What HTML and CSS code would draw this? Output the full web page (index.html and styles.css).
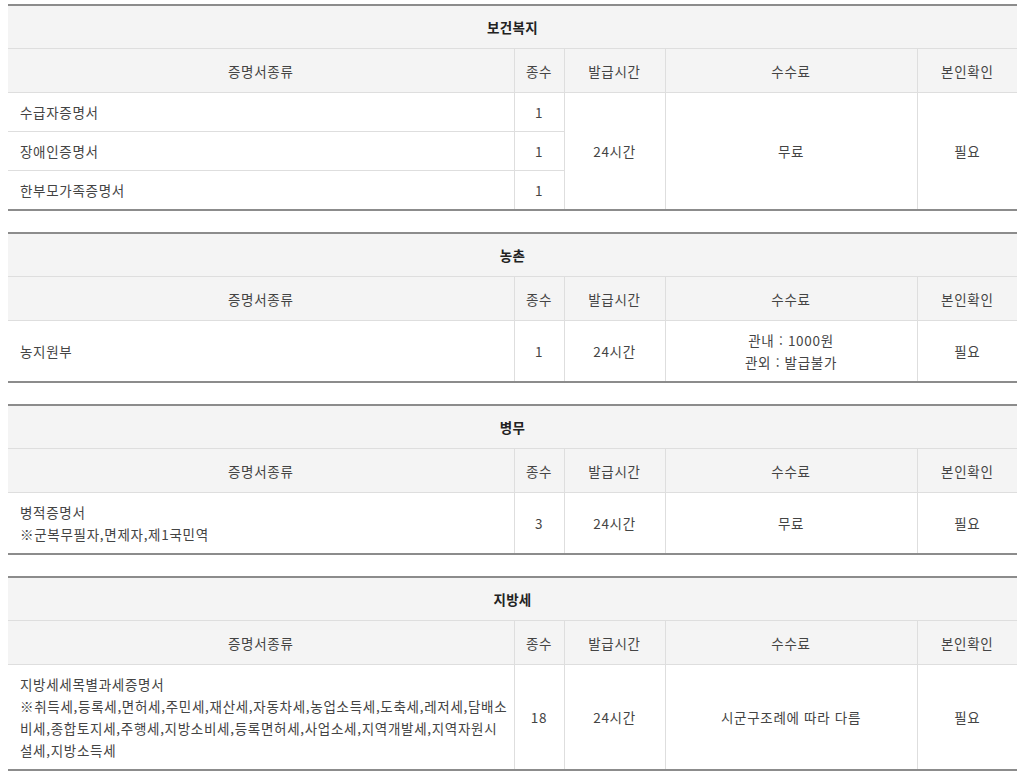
FILE: index.html
```html
<!DOCTYPE html>
<html lang="ko">
<head>
<meta charset="utf-8">
<title>증명서 발급 안내</title>
<link rel="stylesheet" href="styles.css">
</head>
<body>
<table class="cert">
  <colgroup><col class="c-name"><col class="c-cnt"><col class="c-time"><col class="c-fee"><col class="c-id"></colgroup>
  <tr><th class="title" colspan="5">보건복지</th></tr>
  <tr class="head"><th>증명서종류</th><th>종수</th><th>발급시간</th><th>수수료</th><th>본인확인</th></tr>
  <tr><td class="name">수급자증명서</td><td>1</td><td rowspan="3">24시간</td><td rowspan="3">무료</td><td rowspan="3">필요</td></tr>
  <tr><td class="name">장애인증명서</td><td>1</td></tr>
  <tr><td class="name">한부모가족증명서</td><td>1</td></tr>
</table>

<table class="cert">
  <colgroup><col class="c-name"><col class="c-cnt"><col class="c-time"><col class="c-fee"><col class="c-id"></colgroup>
  <tr><th class="title" colspan="5">농촌</th></tr>
  <tr class="head"><th>증명서종류</th><th>종수</th><th>발급시간</th><th>수수료</th><th>본인확인</th></tr>
  <tr><td class="name">농지원부</td><td>1</td><td>24시간</td><td>관내 : 1000원<br>관외 : 발급불가</td><td>필요</td></tr>
</table>

<table class="cert">
  <colgroup><col class="c-name"><col class="c-cnt"><col class="c-time"><col class="c-fee"><col class="c-id"></colgroup>
  <tr><th class="title" colspan="5">병무</th></tr>
  <tr class="head"><th>증명서종류</th><th>종수</th><th>발급시간</th><th>수수료</th><th>본인확인</th></tr>
  <tr><td class="name">병적증명서<br>※군복무필자,면제자,제1국민역</td><td>3</td><td>24시간</td><td>무료</td><td>필요</td></tr>
</table>

<table class="cert">
  <colgroup><col class="c-name"><col class="c-cnt"><col class="c-time"><col class="c-fee"><col class="c-id"></colgroup>
  <tr><th class="title" colspan="5">지방세</th></tr>
  <tr class="head"><th>증명서종류</th><th>종수</th><th>발급시간</th><th>수수료</th><th>본인확인</th></tr>
  <tr><td class="name">지방세세목별과세증명서<br>※취득세,등록세,면허세,주민세,재산세,자동차세,농업소득세,도축세,레저세,담배소<br>비세,종합토지세,주행세,지방소비세,등록면허세,사업소세,지역개발세,지역자원시<br>설세,지방소득세</td><td>18</td><td>24시간</td><td>시군구조례에 따라 다름</td><td>필요</td></tr>
</table>
</body>
</html>
```
FILE: styles.css
```css
html, body {
  background: #fff;
}
body {
  margin: 4px 8px 8px;
  font-family: "Noto Sans CJK KR", "Noto Sans", sans-serif;
  font-size: 13.5px;
  letter-spacing: 0.7px;
  color: #444;
}
.cert {
  width: 100%;
  table-layout: fixed;
  border-collapse: collapse;
  border-top: 2px solid #8c8c8c;
  border-bottom: 2px solid #8c8c8c;
  margin-bottom: 21px;
}
.c-name { width: 506px; }
.c-cnt { width: 50px; }
.c-time { width: 101px; }
.c-fee { width: 252px; }
.c-id { width: 100px; }
.cert th,
.cert td {
  border: 1px solid #dedede;
  text-align: center;
  vertical-align: middle;
  line-height: 22px;
  font-weight: normal;
}
.cert tr > :first-child { border-left: none; }
.cert tr > :last-child { border-right: none; }
.cert th {
  background: #f4f4f4;
  padding: 10.5px 4px;
}
.cert th.title {
  padding: 10px 4px;
  font-weight: bold;
  color: #222;
  letter-spacing: 0.3px;
  border-left: none;
  border-right: none;
}
.cert td {
  padding: 8px 4px;
}
.cert td.name {
  text-align: left;
  padding: 8px 0 8px 12px;
  border-left: none;
}
```
